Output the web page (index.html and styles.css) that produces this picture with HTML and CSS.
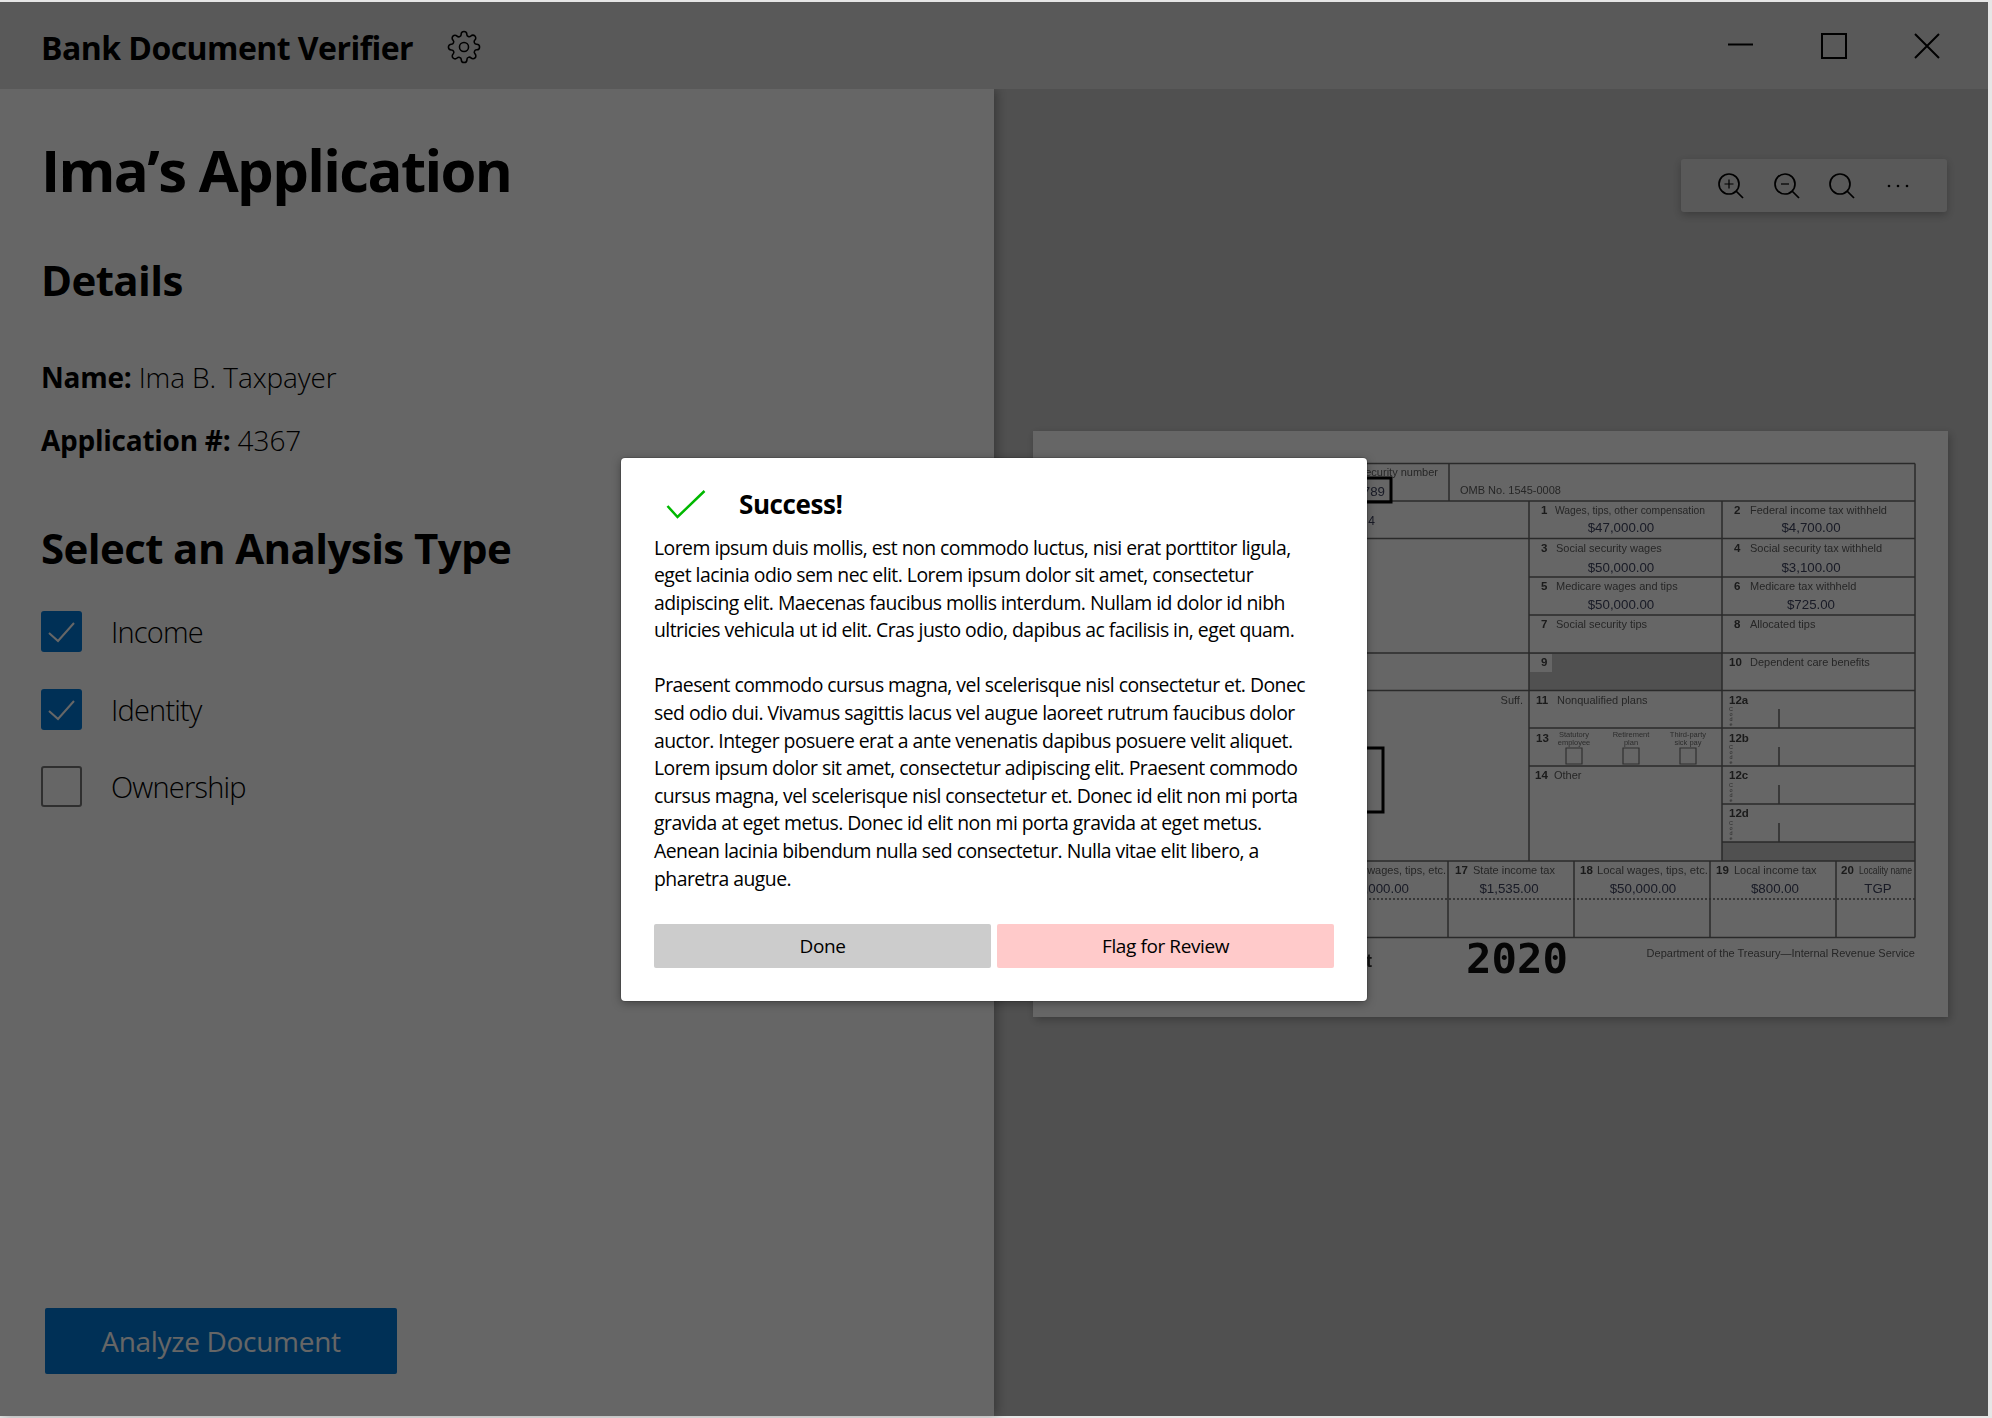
FILE: index.html
```html
<!DOCTYPE html>
<html lang="en">

<head>
    <meta charset="UTF-8">
    <meta name="viewport" content="width=device-width, initial-scale=1.0">
    <title>Bank Document Verifier</title>
    <link rel="stylesheet" href="styles.css">
</head>

<body>
    <div class="window">
        <header class="titlebar">
            <div class="app-name">Bank Document Verifier</div>
            <svg class="gear" viewBox="0 0 24 24">
                <circle cx="12" cy="12" r="3.2"></circle>
                <path d="M19.4 15a1.65 1.65 0 0 0 .33 1.82l.06.06a2 2 0 0 1 0 2.83 2 2 0 0 1-2.83 0l-.06-.06a1.65 1.65 0 0 0-1.82-.33 1.65 1.65 0 0 0-1 1.51V21a2 2 0 0 1-2 2 2 2 0 0 1-2-2v-.09A1.65 1.65 0 0 0 9 19.4a1.65 1.65 0 0 0-1.82.33l-.06.06a2 2 0 0 1-2.83 0 2 2 0 0 1 0-2.83l.06-.06a1.65 1.65 0 0 0 .33-1.82 1.65 1.65 0 0 0-1.51-1H3a2 2 0 0 1-2-2 2 2 0 0 1 2-2h.09A1.65 1.65 0 0 0 4.6 9a1.65 1.65 0 0 0-.33-1.82l-.06-.06a2 2 0 0 1 0-2.83 2 2 0 0 1 2.83 0l.06.06a1.65 1.65 0 0 0 1.82.33H9a1.65 1.65 0 0 0 1-1.51V3a2 2 0 0 1 2-2 2 2 0 0 1 2 2v.09a1.65 1.65 0 0 0 1 1.51 1.65 1.65 0 0 0 1.82-.33l.06-.06a2 2 0 0 1 2.83 0 2 2 0 0 1 0 2.83l-.06.06a1.65 1.65 0 0 0-.33 1.82V9a1.65 1.65 0 0 0 1.51 1H21a2 2 0 0 1 2 2 2 2 0 0 1-2 2h-.09a1.65 1.65 0 0 0-1.51 1z"></path>
            </svg>
            <div class="window-controls">
                <svg viewBox="0 0 26 26"><path d="M0 11.5H25"></path></svg>
                <svg viewBox="0 0 26 26"><path d="M1 1H25V25H1Z"></path></svg>
                <svg viewBox="0 0 26 26"><path d="M1 1L25 25M25 1L1 25"></path></svg>
            </div>
        </header>

        <div class="main">
            <section class="left">
                <h1>Ima’s Application</h1>
                <h2>Details</h2>
                <p class="field"><b>Name:</b> Ima B. Taxpayer</p>
                <p class="field"><b>Application #:</b> 4367</p>
                <h2 class="analysis-title">Select an Analysis Type</h2>
                <div class="option">
                    <span class="box checked"><svg viewBox="0 0 41 41"><path d="M8 22L17 30L33 12"></path></svg></span>
                    <span>Income</span>
                </div>
                <div class="option">
                    <span class="box checked"><svg viewBox="0 0 41 41"><path d="M8 22L17 30L33 12"></path></svg></span>
                    <span>Identity</span>
                </div>
                <div class="option">
                    <span class="box"></span>
                    <span>Ownership</span>
                </div>
                <button class="analyze">Analyze Document</button>
            </section>

            <section class="viewer">
                <div class="toolbar">
                    <svg viewBox="0 0 28 28"><circle cx="12" cy="12" r="10"></circle><path d="M19 19L26 26"></path><path class="sign" d="M12 7.5V16.5M7.5 12H16.5"></path></svg>
                    <svg viewBox="0 0 28 28"><circle cx="12" cy="12" r="10"></circle><path d="M19 19L26 26"></path><path class="sign" d="M8 12H16"></path></svg>
                    <svg viewBox="0 0 28 28"><circle cx="12" cy="12" r="10"></circle><path d="M19 19L26 26"></path></svg>
                    <svg viewBox="0 0 28 28"><circle class="dot" cx="5" cy="14" r="1.3"></circle><circle class="dot" cx="14" cy="14" r="1.3"></circle><circle class="dot" cx="23" cy="14" r="1.3"></circle></svg>
                </div>

                <div class="paper">
                    <svg class="form" viewBox="1033 431 915 586">
                        <defs>
                            <g id="code">
                                <text class="tiny" text-anchor="middle"><tspan x="1731" y="711">C</tspan><tspan x="1731" dy="5">o</tspan><tspan x="1731" dy="5">d</tspan><tspan x="1731" dy="5">e</tspan></text>
                                <path class="line" d="M1779 709V728"></path>
                            </g>
                        </defs>

                        <rect class="shade" x="1529" y="653" width="193" height="37"></rect>
                        <rect class="cell-9" x="1530" y="654" width="22" height="18"></rect>
                        <rect class="shade" x="1722" y="842" width="193" height="19"></rect>

                        <path class="line" d="M1033 463.5H1915M1033 501H1915M1033 538.5H1915M1529 577H1915M1529 615H1915M1033 653H1915M1033 690.5H1915M1529 728H1915M1529 766H1915M1722 804H1915M1722 842H1915M1033 861H1915M1033 937.5H1915"></path>
                        <path class="line" d="M1915 463.5V937.5M1449 463.5V501M1529 501V861M1722 501V861M1448 861V937.5M1574 861V937.5M1710 861V937.5M1836 861V937.5"></path>
                        <path class="dotted" d="M1033 899H1915"></path>
                        <path class="heavy" d="M1300 478H1391V502H1300M1300 748H1383V812H1300"></path>

                        <text class="label" x="1438" y="476" text-anchor="end">ecurity number</text>
                        <text class="value" x="1385" y="496" text-anchor="end">789</text>
                        <text class="label" x="1460" y="494">OMB No. 1545-0008</text>
                        <text class="value small" x="1375" y="525" text-anchor="end">4</text>
                        <text class="label" x="1523" y="704" text-anchor="end">Suff.</text>

                        <text class="num" x="1541" y="514">1</text><text class="label" x="1555" y="514" textLength="150" lengthAdjust="spacingAndGlyphs">Wages, tips, other compensation</text>
                        <text class="value" x="1621" y="532" text-anchor="middle">$47,000.00</text>
                        <text class="num" x="1734" y="514">2</text><text class="label" x="1750" y="514">Federal income tax withheld</text>
                        <text class="value" x="1811" y="532" text-anchor="middle">$4,700.00</text>

                        <text class="num" x="1541" y="552">3</text><text class="label" x="1556" y="552">Social security wages</text>
                        <text class="value" x="1621" y="572" text-anchor="middle">$50,000.00</text>
                        <text class="num" x="1734" y="552">4</text><text class="label" x="1750" y="552">Social security tax withheld</text>
                        <text class="value" x="1811" y="572" text-anchor="middle">$3,100.00</text>

                        <text class="num" x="1541" y="590">5</text><text class="label" x="1556" y="590">Medicare wages and tips</text>
                        <text class="value" x="1621" y="609" text-anchor="middle">$50,000.00</text>
                        <text class="num" x="1734" y="590">6</text><text class="label" x="1750" y="590">Medicare tax withheld</text>
                        <text class="value" x="1811" y="609" text-anchor="middle">$725.00</text>

                        <text class="num" x="1541" y="628">7</text><text class="label" x="1556" y="628">Social security tips</text>
                        <text class="num" x="1734" y="628">8</text><text class="label" x="1750" y="628">Allocated tips</text>

                        <text class="num" x="1541" y="666">9</text>
                        <text class="num" x="1729" y="666">10</text><text class="label" x="1750" y="666">Dependent care benefits</text>

                        <text class="num" x="1536" y="704">11</text><text class="label" x="1557" y="704">Nonqualified plans</text>
                        <text class="num" x="1729" y="704">12a</text>
                        <use href="#code"></use>

                        <text class="num" x="1536" y="742">13</text>
                        <text class="micro" x="1574" y="737" text-anchor="middle">Statutory</text>
                        <text class="micro" x="1574" y="745" text-anchor="middle">employee</text>
                        <text class="micro" x="1631" y="737" text-anchor="middle">Retirement</text>
                        <text class="micro" x="1631" y="745" text-anchor="middle">plan</text>
                        <text class="micro" x="1688" y="737" text-anchor="middle">Third-party</text>
                        <text class="micro" x="1688" y="745" text-anchor="middle">sick pay</text>
                        <path class="thin" d="M1566 748H1582V764H1566ZM1623 748H1639V764H1623ZM1680 748H1696V764H1680Z"></path>
                        <text class="num" x="1729" y="742">12b</text>
                        <use href="#code" y="38"></use>

                        <text class="num" x="1535" y="779">14</text><text class="label" x="1554" y="779">Other</text>
                        <text class="num" x="1729" y="779">12c</text>
                        <use href="#code" y="76"></use>
                        <text class="num" x="1729" y="817">12d</text>
                        <use href="#code" y="114"></use>

                        <text class="label" x="1446" y="874" text-anchor="end">wages, tips, etc.</text>
                        <text class="value" x="1409" y="893" text-anchor="end">,000.00</text>
                        <text class="num" x="1455" y="874">17</text><text class="label" x="1473" y="874">State income tax</text>
                        <text class="value" x="1509" y="893" text-anchor="middle">$1,535.00</text>
                        <text class="num" x="1580" y="874">18</text><text class="label" x="1597" y="874" textLength="111" lengthAdjust="spacingAndGlyphs">Local wages, tips, etc.</text>
                        <text class="value" x="1643" y="893" text-anchor="middle">$50,000.00</text>
                        <text class="num" x="1716" y="874">19</text><text class="label" x="1734" y="874">Local income tax</text>
                        <text class="value" x="1775" y="893" text-anchor="middle">$800.00</text>
                        <text class="num" x="1841" y="874">20</text><text class="label" x="1859" y="874" textLength="53" lengthAdjust="spacingAndGlyphs">Locality name</text>
                        <text class="value" x="1878" y="893" text-anchor="middle">TGP</text>

                        <text class="statement" x="1372" y="967" text-anchor="end">t</text>
                        <text class="year" x="1466" y="973" textLength="102" lengthAdjust="spacingAndGlyphs">2020</text>
                        <text class="label" x="1915" y="957" text-anchor="end">Department of the Treasury—Internal Revenue Service</text>
                    </svg>
                </div>
            </section>
        </div>

        <div class="overlay">
            <div class="dialog">
                <div class="dialog-head">
                    <svg class="success-check" viewBox="0 0 40 30"><path d="M1.5 16L11.5 27L38.5 1"></path></svg>
                    <div class="dialog-title">Success!</div>
                </div>
                <p>Lorem ipsum duis mollis, est non commodo luctus, nisi erat porttitor ligula,<br>
                    eget lacinia odio sem nec elit. Lorem ipsum dolor sit amet, consectetur<br>
                    adipiscing elit. Maecenas faucibus mollis interdum. Nullam id dolor id nibh<br>
                    ultricies vehicula ut id elit. Cras justo odio, dapibus ac facilisis in, eget quam.</p>
                <p>Praesent commodo cursus magna, vel scelerisque nisl consectetur et. Donec<br>
                    sed odio dui. Vivamus sagittis lacus vel augue laoreet rutrum faucibus dolor<br>
                    auctor. Integer posuere erat a ante venenatis dapibus posuere velit aliquet.<br>
                    Lorem ipsum dolor sit amet, consectetur adipiscing elit. Praesent commodo<br>
                    cursus magna, vel scelerisque nisl consectetur et. Donec id elit non mi porta<br>
                    gravida at eget metus. Donec id elit non mi porta gravida at eget metus.<br>
                    Aenean lacinia bibendum nulla sed consectetur. Nulla vitae elit libero, a<br>
                    pharetra augue.</p>
                <div class="dialog-buttons">
                    <button class="done">Done</button>
                    <button class="flag">Flag for Review</button>
                </div>
            </div>
        </div>
    </div>
</body>

</html>
```

FILE: styles.css
```css
* {
    box-sizing: border-box;
}

body {
    font-family: "Open Sans", "Noto Sans", sans-serif;
    margin: 0;
    height: 1418px;
    padding: 2px 4px 2px 0;
    background-color: #e6e6e6;
    color: #000;
    overflow: hidden;
}

.window {
    position: relative;
    height: 1414px;
    display: flex;
    flex-direction: column;
    background-color: #fff;
}

.titlebar {
    position: relative;
    z-index: 2;
    height: 87px;
    flex: none;
    display: flex;
    align-items: center;
    padding: 0 48px 0 41px;
    background-color: #dfdfdf;
}

.app-name {
    margin-top: 3px;
    font-size: 32px;
    font-weight: 700;
    letter-spacing: -0.55px;
}

.gear {
    width: 34px;
    height: 34px;
    margin: 2px 0 0 34px;
    fill: none;
    stroke: #000;
    stroke-width: 1.1;
}

.window-controls {
    margin: 1px 0 0 auto;
    display: flex;
    gap: 67px;
}

.window-controls svg {
    width: 26px;
    height: 26px;
    fill: none;
    stroke: #000;
    stroke-width: 2;
}

.main {
    flex: 1;
    display: flex;
    min-height: 0;
}

.left {
    position: relative;
    z-index: 1;
    width: 994px;
    flex: none;
    display: flex;
    flex-direction: column;
    padding: 0 0 42px 41px;
    background-color: #fff;
    box-shadow: 3px 0 10px rgba(0, 0, 0, 0.3);
}

h1 {
    font-size: 58px;
    font-weight: 700;
    line-height: 80px;
    letter-spacing: -1.65px;
    margin: 41px 0 0;
}

h2 {
    font-size: 42px;
    font-weight: 700;
    line-height: 56px;
    letter-spacing: -0.6px;
    margin: 41.5px 0 0;
}

.field {
    font-size: 28px;
    font-weight: 300;
    line-height: 38px;
    letter-spacing: -0.1px;
    margin: 0;
}

.field b {
    font-weight: 700;
    letter-spacing: -0.25px;
}

h2 + .field {
    margin-top: 50.5px;
}

.field + .field {
    margin-top: 25px;
}

.analysis-title {
    margin-top: 61px;
}

.option {
    display: flex;
    align-items: center;
    gap: 29px;
    height: 41px;
    margin-top: 36.5px;
    font-size: 29px;
    font-weight: 300;
    letter-spacing: -0.8px;
}

.analysis-title + .option {
    margin-top: 35px;
}

.box {
    width: 41px;
    height: 41px;
    flex: none;
    border: 2px solid #777;
    border-radius: 3px;
}

.box.checked {
    border: none;
    background-color: #0078d7;
}

.box svg {
    display: block;
    fill: none;
    stroke: #fff;
    stroke-width: 2;
}

.analyze {
    margin: auto 0 0 4px;
    width: 352px;
    height: 66px;
    border: none;
    border-radius: 2px;
    background-color: #0078d7;
    color: #fff;
    font-family: inherit;
    font-size: 28px;
    letter-spacing: -0.3px;
}

.viewer {
    flex: 1;
    position: relative;
    padding: 342px 40px 0 39px;
    background-color: #c8c8c8;
}

.toolbar {
    position: absolute;
    top: 70px;
    right: 41px;
    width: 266px;
    height: 53px;
    display: flex;
    align-items: center;
    gap: 27.5px;
    padding-left: 36px;
    border-radius: 3px;
    background-color: #dfdfdf;
    box-shadow: 0 3px 8px rgba(0, 0, 0, 0.25);
}

.toolbar svg {
    width: 28px;
    height: 28px;
    fill: none;
    stroke: #000;
    stroke-width: 1.7;
}

.toolbar .sign {
    stroke-width: 1.2;
}

.toolbar .dot {
    fill: #000;
    stroke: none;
}

.paper {
    height: 586px;
    background-color: #fff;
    box-shadow: 2px 3px 8px rgba(0, 0, 0, 0.25);
}

.form {
    display: block;
    width: 915px;
    height: 586px;
    filter: blur(0.6px);
    font-family: "Liberation Sans", Arial, sans-serif;
}

.line {
    fill: none;
    stroke: #6a6a6a;
    stroke-width: 1.5;
}

.thin {
    fill: none;
    stroke: #777;
    stroke-width: 1.2;
}

.dotted {
    fill: none;
    stroke: #666;
    stroke-width: 1.5;
    stroke-dasharray: 2 2;
}

.heavy {
    fill: none;
    stroke: #000;
    stroke-width: 3;
}

.shade {
    fill: #c8c8c8;
}

.cell-9 {
    fill: #fff;
}

.label {
    font-size: 11px;
    fill: #606060;
}

.num {
    font-size: 11.5px;
    font-weight: 700;
    fill: #444;
}

.value {
    font-size: 13.3px;
    fill: #3f4460;
}

.value.small {
    font-size: 12px;
}

.micro {
    font-size: 7.5px;
    fill: #707070;
}

.tiny {
    font-size: 5.5px;
    fill: #707070;
}

.statement {
    font-size: 18px;
    font-weight: 700;
    fill: #333;
}

.year {
    font-family: "DejaVu Sans Mono", monospace;
    font-size: 40px;
    font-weight: 700;
    fill: #111;
}

.overlay {
    position: absolute;
    inset: 0;
    z-index: 3;
    display: flex;
    justify-content: center;
    align-items: flex-start;
    padding: 456px 0 0;
    background-color: rgba(0, 0, 0, 0.6);
}

.dialog {
    width: 746px;
    height: 543px;
    padding: 23px 33px 0;
    border-radius: 4px;
    background-color: #fff;
    box-shadow: 0 0 0 1px rgba(0, 0, 0, 0.12), 0 2px 10px rgba(0, 0, 0, 0.35);
    color: #000;
}

.dialog-head {
    display: flex;
    align-items: center;
    height: 46px;
    margin-bottom: 6.5px;
}

.success-check {
    width: 40px;
    height: 30px;
    margin: 2px 0 0 12px;
    fill: none;
    stroke: #00b800;
    stroke-width: 2.5;
}

.dialog-title {
    margin-left: 33px;
    font-size: 26px;
    font-weight: 700;
    letter-spacing: -0.4px;
}

.dialog p {
    margin: 0 0 27.6px;
    font-size: 19.4px;
    line-height: 27.6px;
    letter-spacing: -0.53px;
    white-space: nowrap;
}

.dialog-buttons {
    display: flex;
    gap: 6px;
    margin-top: 32px;
    width: 680px;
}

.dialog-buttons button {
    flex: 1;
    height: 44px;
    border: none;
    border-radius: 2px;
    color: #000;
    font-family: inherit;
    font-size: 19px;
    letter-spacing: -0.4px;
}

.done {
    background-color: #ccc;
}

.flag {
    background-color: #ffcaca;
}
```
